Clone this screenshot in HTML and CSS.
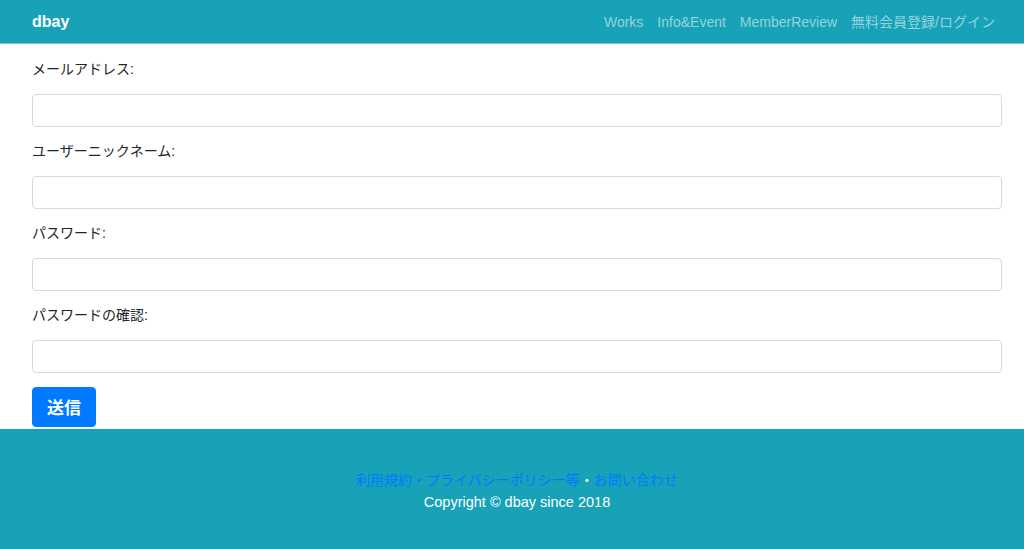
FILE: index.html
```html
<!DOCTYPE html>
<html lang="ja">
<head>
    <meta charset="UTF-8">
    <meta name="viewport" content="width=device-width, initial-scale=1.0">
    <title>dbay 会員登録</title>
    <link rel="stylesheet" href="styles.css">
</head>
<body>
    <nav class="navbar">
        <div class="wrap navbar-inner">
            <a class="brand" href="#">dbay</a>
            <ul class="nav-links">
                <li><a href="#">Works</a></li>
                <li><a href="#">Info&amp;Event</a></li>
                <li><a href="#">MemberReview</a></li>
                <li><a href="#">無料会員登録/ログイン</a></li>
            </ul>
        </div>
    </nav>

    <main class="wrap signup">
        <form>
            <div class="form-group">
                <label for="email">メールアドレス:</label>
                <input type="email" id="email" class="form-control">
            </div>
            <div class="form-group">
                <label for="nickname">ユーザーニックネーム:</label>
                <input type="text" id="nickname" class="form-control">
            </div>
            <div class="form-group">
                <label for="password">パスワード:</label>
                <input type="password" id="password" class="form-control">
            </div>
            <div class="form-group">
                <label for="password2">パスワードの確認:</label>
                <input type="password" id="password2" class="form-control">
            </div>
            <button type="submit" class="btn-submit">送信</button>
        </form>
    </main>

    <footer class="footer">
        <div class="wrap">
            <p><a href="#">利用規約・プライバシーポリシー等</a>・<a href="#">お問い合わせ</a></p>
            <p class="copyright">Copyright &copy; dbay since 2018</p>
        </div>
    </footer>
</body>
</html>
```

FILE: styles.css
```css
body {
    margin: 0;
    font-family: "Liberation Sans", "Noto Sans CJK JP", sans-serif;
    font-size: 14px;
    color: #212529;
    background: #fff;
}
a {
    text-decoration: none;
}
.wrap {
    padding: 0 22px 0 32px;
}
.navbar {
    background-color: #17a2b8;
    height: 44px;
    border-bottom: 1px solid #7cc9d5;
    box-sizing: border-box;
}
.navbar-inner {
    display: flex;
    align-items: center;
    justify-content: space-between;
    height: 100%;
}
.brand {
    color: #fff;
    font-size: 16px;
    font-weight: bold;
}
.nav-links {
    display: flex;
    list-style: none;
    margin: 0;
    padding: 0;
}
.nav-links a {
    display: block;
    padding: 0 7px;
    color: rgba(255, 255, 255, 0.55);
    font-size: 14px;
    line-height: 20px;
}
.signup {
    padding-top: 14px;
    padding-bottom: 2px;
}
.form-group {
    margin-bottom: 13px;
}
.form-group label {
    display: block;
    line-height: 22px;
    margin-bottom: 14px;
}
.form-control {
    display: block;
    width: 100%;
    height: 33px;
    box-sizing: border-box;
    border: 1px solid #d6dadf;
    border-radius: 4px;
    padding: 4px 10px;
    font-size: 14px;
}
.btn-submit {
    display: block;
    margin: 14px 0 0;
    background-color: #007bff;
    color: #fff;
    border: 1px solid #007bff;
    border-radius: 4px;
    font-family: "Noto Sans CJK JP", sans-serif;
    font-size: 17px;
    font-weight: bold;
    line-height: 24px;
    padding: 7px 14px;
    cursor: pointer;
}
.footer {
    background-color: #17a2b8;
    color: #fff;
    text-align: center;
    height: 121px;
    box-sizing: border-box;
    padding-top: 40px;
}
.footer p {
    margin: 0;
    line-height: 22px;
}
.footer a {
    color: #007bff;
}
.footer .copyright {
    font-size: 14.5px;
}
```
